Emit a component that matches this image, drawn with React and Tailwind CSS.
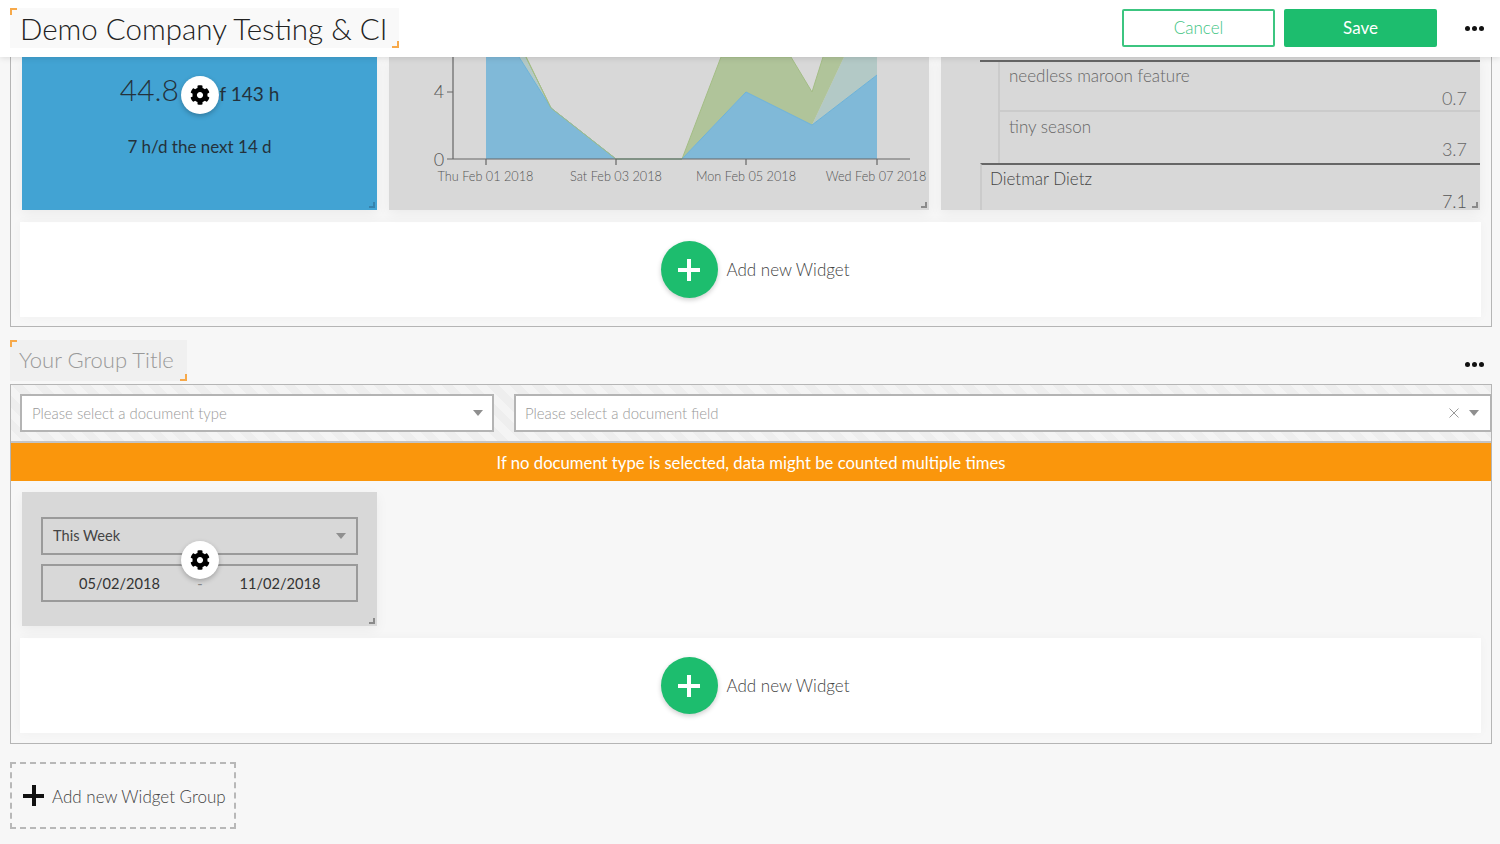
import React from "react";
import { FaCog } from "react-icons/fa";

function Corners() {
  return (
    <>
      <span className="absolute left-0 top-0 w-[7px] h-[7px] border-l-2 border-t-2 border-[#f7a94a]" />
      <span className="absolute right-0 bottom-0 w-[7px] h-[7px] border-r-2 border-b-2 border-[#f7a94a]" />
    </>
  );
}

function Dots() {
  return (
    <div className="flex gap-[2px]">
      <span className="w-[5px] h-[5px] rounded-full bg-[#111]" />
      <span className="w-[5px] h-[5px] rounded-full bg-[#111]" />
      <span className="w-[5px] h-[5px] rounded-full bg-[#111]" />
    </div>
  );
}

function Gear({ className }) {
  return (
    <div className={"absolute left-[159px] w-[38px] h-[38px] rounded-full bg-white flex items-center justify-center shadow-[0_2px_5px_rgba(0,0,0,0.25)] " + className}>
      <FaCog className="text-[20px] text-black" />
    </div>
  );
}

function Handle({ color = "border-[#8a8a8a]" }) {
  return <span className={"absolute right-[2px] bottom-[2px] w-[6px] h-[6px] border-r-2 border-b-2 " + color} />;
}

function AddBar() {
  return (
    <div className="ml-[9px] mr-[10px] h-[95px] bg-white flex items-center justify-center pl-[9px] gap-[9px] shadow-[0_0_10px_rgba(0,0,0,0.03)]">
      <div className="w-[57px] h-[57px] rounded-full bg-[#1dbd6e] flex items-center justify-center relative shadow-[0_2px_5px_rgba(0,0,0,0.2)]">
        <span className="w-[22px] h-[4px] bg-white" />
        <span className="absolute w-[4px] h-[22px] bg-white" />
      </div>
      <span className="text-[17px] font-light text-[#444]">Add new Widget</span>
    </div>
  );
}

function Caret() {
  return <span className="w-0 h-0 border-x-[5px] border-x-transparent border-t-[6px] border-t-[#8f8f8f]" />;
}

function Chart() {
  return (
    <svg viewBox="389 57 540 153" className="block w-[540px] h-[153px]">
      <polygon points="519,57 526,57 551,108" fill="#b3c9c6" />
      <polygon points="812,125 844,57 877,57 877,75" fill="#b3c9c6" />
      <polygon points="682,159 721,57 791,57 812,92 823,57 844,57 812,125 746,92" fill="#b0c49a" />
      <polyline points="526,57 551,108 616,159 682,159 721,57 791,57 812,92 823,57" fill="none" stroke="#a3bd85" strokeWidth="1" />
      <polygon points="486,57 519,57 551,108 616,159 682,159 746,92 812,125 877,75 877,159 486,159" fill="#80b9d8" />
      <polyline points="519,57 551,108 616,159 682,159 746,92 812,125 877,75" fill="none" stroke="#6db3d8" strokeWidth="1" />
      <polyline points="526,57 551,108 616,159 682,159" fill="none" stroke="#a3bd85" strokeWidth="1" />
      <path d="M453 57V159H910M447 92H453M447 159H453M486 159V165M616 159V165M746 159V165M877 159V165" fill="none" stroke="#666" strokeWidth="1.2" />
      <g fill="#555" fontSize="12.7" textAnchor="middle" fontFamily="Lato, sans-serif" fontWeight="300">
        <text x="485.5" y="180.5">Thu Feb 01 2018</text>
        <text x="616" y="180.5">Sat Feb 03 2018</text>
        <text x="746" y="180.5">Mon Feb 05 2018</text>
        <text x="876" y="180.5">Wed Feb 07 2018</text>
      </g>
      <g fill="#555" fontSize="18" textAnchor="middle" fontFamily="Lato, sans-serif" fontWeight="300">
        <text x="439" y="98">4</text>
        <text x="439" y="166">0</text>
      </g>
    </svg>
  );
}

function TableWidget() {
  return (
    <div className="relative w-[539px] h-[153px] bg-[#d8d8d8] overflow-hidden pl-[39px] shadow-[0_4px_12px_rgba(0,0,0,0.05)]">
      <div className="mt-[3px] border-t-2 border-[#666]">
        <div className="ml-[18px] border-l-2 border-[#cbcbcb]">
          <div className="h-[50px] border-b-2 border-[#cbcbcb] pl-[9px] pr-[13px] text-[#666] text-[17px] font-light relative">
            <div className="pt-[2px] leading-[24px]">needless maroon feature</div>
            <div className="absolute right-[13px] top-[24px] text-[18px] font-light leading-[24px]">0.7</div>
          </div>
          <div className="h-[51px] pl-[9px] pr-[13px] text-[#666] text-[17px] font-light relative">
            <div className="pt-[3px] leading-[24px]">tiny season</div>
            <div className="absolute right-[13px] top-[25px] text-[18px] font-light leading-[24px]">3.7</div>
          </div>
        </div>
      </div>
      <div className="border-t-2 border-[#666] border-l-2 border-l-[#cbcbcb] h-[50px] pl-[8px] relative text-[#444] text-[17px] font-light">
        <div className="pt-[2px] leading-[24px]">Dietmar Dietz</div>
        <div className="absolute right-[13px] top-[27px] text-[18px] font-light leading-[18px] text-[#555]">7.1</div>
      </div>
      <Handle />
    </div>
  );
}

export default function App() {
  return (
    <div className="w-[1500px] h-[844px] overflow-hidden bg-[#f7f7f7] font-['Lato',sans-serif]">
      <header className="relative z-10 h-[57px] bg-white flex items-center pb-[1px] pl-[10px] pr-[16px] shadow-[0_1px_6px_rgba(0,0,0,0.12)]">
        <div className="relative w-[389px] h-[40px] bg-[#f9f9f9] pl-[10px] text-[29.5px] leading-[42px] font-light text-[#222] whitespace-nowrap">
          Demo Company Testing &amp; CI
          <Corners />
        </div>
        <div className="ml-auto flex items-center">
          <button className="w-[153px] h-[38px] rounded-[2px] border-2 border-[#3cc580] bg-white text-[#3ec482] text-[17px] font-light">Cancel</button>
          <button className="ml-[9px] w-[153px] h-[38px] rounded-[2px] bg-[#1dbd6e] text-white text-[17px]">Save</button>
          <div className="ml-[28px]"><Dots /></div>
        </div>
      </header>

      <section className="mx-[10px] w-[1482px] border-x border-b border-[#b5b5b5] pb-[9px]">
        <div className="flex gap-[12px] pl-[11px] h-[153px] mb-[12px]">
          <div className="relative w-[355px] h-[153px] bg-[#42a3d3] text-[#24323c] text-center shadow-[0_4px_12px_rgba(0,0,0,0.05)]">
            <div className="pt-[12px] leading-[40px] text-[19px] whitespace-nowrap">
              <span className="text-[30px] font-light">44.8</span>
              <span className="ml-[30px]">of 143 h</span>
            </div>
            <div className="mt-[20px] text-[17px] leading-[26px]">7 h/d the next 14 d</div>
            <Gear className="top-[19px]" />
            <Handle color="border-[#3583ad]" />
          </div>
          <div className="relative w-[540px] h-[153px] bg-[#d8d8d8] shadow-[0_4px_12px_rgba(0,0,0,0.05)]">
            <Chart />
            <Handle />
          </div>
          <TableWidget />
        </div>
        <AddBar />
      </section>

      <div className="mt-[13px] ml-[10px] h-[41px] flex items-start justify-between pr-[16px]">
        <div className="relative w-[177px] h-[41px] bg-[#f0f0f0] pl-[9px] text-[22px] leading-[40px] font-light text-[#999] whitespace-nowrap">
          Your Group Title
          <Corners />
        </div>
        <div className="mt-[22px]"><Dots /></div>
      </div>

      <section className="mt-[3px] mx-[10px] w-[1482px] border border-[#b5b5b5] pb-[10px]">
        <div className="h-[58px] flex items-center gap-[20px] pl-[9px] bg-[repeating-linear-gradient(45deg,#f4f4f4_0,#f4f4f4_8px,#eeeeee_8px,#eeeeee_16px)] border-b-2 border-[#c4c4c4]">
          <div className="w-[474px] h-[38px] bg-white border-2 border-[#b4b4b4] flex items-center justify-between pl-[10px] pr-[9px] text-[14.9px] font-light text-[#999]">
            <span>Please select a document type</span>
            <Caret />
          </div>
          <div className="flex-1 -mr-px h-[38px] bg-white border-2 border-[#b4b4b4] flex items-center pl-[9px] pr-[11px] text-[14.9px] font-light text-[#999]">
            <span>Please select a document field</span>
            <svg viewBox="0 0 10 10" className="ml-auto mr-[10px] w-[10px] h-[10px]" fill="none" stroke="#999" strokeWidth="1">
              <path d="M0.5 0.5L9.5 9.5M9.5 0.5L0.5 9.5" />
            </svg>
            <Caret />
          </div>
        </div>
        <div className="h-[38px] pt-[3px] bg-[#fa960c] text-white text-[16.7px] flex items-center justify-center">
          If no document type is selected, data might be counted multiple times
        </div>
        <div className="pt-[11px] pl-[11px] mb-[12px]">
          <div className="relative w-[355px] h-[134px] bg-[#d8d8d8] px-[19px] pt-[25px] shadow-[0_4px_12px_rgba(0,0,0,0.05)]">
            <div className="h-[38px] pb-[1px] border-2 border-[#9a9a9a] flex items-center justify-between pl-[10px] pr-[10px] text-[14.6px] text-[#444]">
              <span>This Week</span>
              <Caret />
            </div>
            <div className="mt-[9px] h-[38px] pt-[1px] border-2 border-[#9a9a9a] flex items-center text-[14.6px] text-[#333]">
              <span className="w-[153px] text-center">05/02/2018</span>
              <span className="w-[8px] text-center text-[#888]">-</span>
              <span className="w-[152px] text-center">11/02/2018</span>
            </div>
            <Gear className="top-[49px]" />
            <Handle />
          </div>
        </div>
        <AddBar />
      </section>

      <div className="mt-[18px] ml-[10px] w-[226px] h-[67px] border-2 border-dashed border-[#b8b8b8] flex items-center pl-[11px]">
        <div className="relative w-[21px] h-[21px] flex items-center justify-center">
          <span className="w-[21px] h-[4px] bg-[#111]" />
          <span className="absolute w-[4px] h-[21px] bg-[#111]" />
        </div>
        <span className="ml-[8px] pt-[2px] text-[17px] font-light text-[#444] whitespace-nowrap">Add new Widget Group</span>
      </div>
    </div>
  );
}
